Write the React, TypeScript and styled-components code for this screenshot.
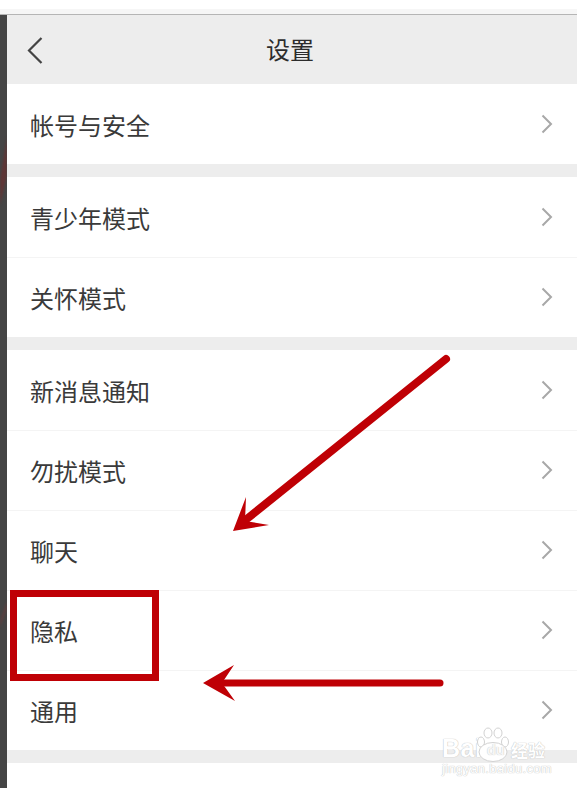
import React from 'react'
import styled, { createGlobalStyle } from 'styled-components'

const GlobalStyle = createGlobalStyle`
  html, body {
    margin: 0;
    padding: 0;
    background: #fff;
  }
  body {
    font-family: "Noto Sans CJK SC", "Liberation Sans", sans-serif;
  }
`

const Page = styled.div`
  position: relative;
  width: 577px;
  height: 788px;
  overflow: hidden;
  background: #fff;
`

const TopEdge = styled.div`
  height: 5px;
  margin-top: 9px;
  background: #f6f6f6;
  border-bottom: 1px solid #b5b5b5;
`

const Body = styled.div`
  display: flex;
  height: 773px;
`

const SideStrip = styled.div`
  position: relative;
  flex: 0 0 7px;
  overflow: hidden;
  background: #454545;
`

const Streak = styled.svg`
  position: absolute;
  left: 0;
  top: 0;
  filter: blur(1px);
`

const Screen = styled.div`
  flex: 1;
  min-width: 0;
  background: #fff;
`

const Header = styled.header`
  position: relative;
  display: flex;
  align-items: center;
  justify-content: center;
  height: 69px;
  background: #ededed;
`

const Title = styled.h1`
  margin: 0 4px 2px 0;
  font-size: 24px;
  line-height: 32px;
  font-weight: 400;
  color: #2c2c2c;
`

const BackButton = styled.svg`
  position: absolute;
  left: 19px;
  top: 21px;
`

const Group = styled.section`
  background: #fff;
`

const Gap = styled.div`
  height: 13px;
  background: #ededed;
`

const Row = styled.div`
  display: flex;
  align-items: center;
  justify-content: space-between;
  box-sizing: border-box;
  height: 80px;
  padding: 2px 24px 0 23px;
  & + & {
    padding-top: 0;
    border-top: 1px solid #f4f4f4;
  }
`

const Label = styled.span`
  font-size: 24px;
  line-height: 32px;
  color: #3a3a3a;
`

const Chevron = styled.svg`
  flex: none;
  margin-bottom: 2px;
`

const Overlay = styled.svg`
  position: absolute;
  inset: 0;
  pointer-events: none;
`

const Highlight = styled.div`
  position: absolute;
  left: 10px;
  top: 590px;
  box-sizing: border-box;
  width: 149px;
  height: 91px;
  border: 7px solid #bf0005;
`

const Watermark = styled.div`
  position: absolute;
  left: 442px;
  top: 727px;
  width: 106px;
  color: #fff;
  text-shadow: 0 0 1px #c4c4c4, 0 0 1px #c4c4c4;
`

const BaiduLine = styled.div`
  display: flex;
  align-items: flex-end;
  height: 35px;
  font-family: "Liberation Sans", sans-serif;
  font-size: 25px;
  font-weight: 700;
  line-height: 28px;
`

const Bai = styled.span`
  width: 39px;
  letter-spacing: 0.5px;
`

const PawMark = styled.span`
  position: relative;
  display: flex;
  align-items: flex-end;
  justify-content: center;
  flex: 0 0 29px;
  height: 35px;
  font-size: 15px;
  line-height: 20px;
  letter-spacing: -0.5px;
`

const PawShape = styled.svg`
  position: absolute;
  left: -6px;
  top: 0;
`

const DuText = styled.span`
  position: relative;
  margin-bottom: 2px;
  color: #f6f6f6;
  text-shadow: 0 0 1px #b8b8b8;
`

const BaiduCn = styled.span`
  margin-left: 1px;
  font-family: "Noto Sans CJK SC", sans-serif;
  font-size: 17px;
  line-height: 24px;
  font-weight: 700;
  white-space: nowrap;
`

const Domain = styled.div`
  font-family: "Liberation Sans", sans-serif;
  font-size: 13px;
  line-height: 14px;
  letter-spacing: 0.3px;
  white-space: nowrap;
`

const groups = [
  ['帐号与安全'],
  ['青少年模式', '关怀模式'],
  ['新消息通知', '勿扰模式', '聊天', '隐私', '通用'],
]

function ChevronIcon() {
  return (
    <Chevron width="12" height="20" viewBox="0 0 12 20" fill="none">
      <path d="M1.5 1.5 L10 10 L1.5 18.5" stroke="#a8a8a8" strokeWidth="2" />
    </Chevron>
  )
}

export default function App() {
  return (
    <Page>
      <GlobalStyle />
      <TopEdge />
      <Body>
        <SideStrip>
          <Streak width="7" height="773">
            <path d="M7 122 L7 160 L0 190 L0 165 Z" fill="#5f3636" />
            <path d="M0 606 L7 586 L7 594 L0 612 Z" fill="#5c4040" />
          </Streak>
        </SideStrip>
        <Screen>
          <Header>
            <BackButton width="18" height="30" viewBox="0 0 18 30" fill="none">
              <path d="M15.5 2 L3 14.5 L15.5 27" stroke="#444" strokeWidth="2.2" />
            </BackButton>
            <Title>设置</Title>
          </Header>
          {groups.map((rows) => (
            <React.Fragment key={rows[0]}>
              <Group>
                {rows.map((label) => (
                  <Row key={label}>
                    <Label>{label}</Label>
                    <ChevronIcon />
                  </Row>
                ))}
              </Group>
              <Gap />
            </React.Fragment>
          ))}
        </Screen>
      </Body>
      <Highlight />
      <Overlay width="577" height="788" viewBox="0 0 577 788">
        <path d="M446 359 L243 522" stroke="#bf0005" strokeWidth="8" strokeLinecap="round" fill="none" />
        <path d="M233 531 L246 497 L245 521 L269 525 Z" fill="#bf0005" />
        <path d="M440 683 L225 683" stroke="#bf0005" strokeWidth="7" strokeLinecap="round" fill="none" />
        <path d="M203 683 L234 665 L222 683 L235 701 Z" fill="#bf0005" />
      </Overlay>
      <Watermark>
        <BaiduLine>
          <Bai>Bai</Bai>
          <PawMark>
            <PawShape width="36" height="35" viewBox="0 0 36 35" fill="#fff" stroke="#d2d2d2" strokeWidth="1">
              <ellipse cx="6" cy="15" rx="3.5" ry="5" />
              <ellipse cx="13" cy="6" rx="4" ry="5" />
              <ellipse cx="23" cy="6" rx="4" ry="5" />
              <ellipse cx="30" cy="15" rx="3.5" ry="5" />
              <ellipse cx="18" cy="25" rx="14" ry="9.5" />
            </PawShape>
            <DuText>du</DuText>
          </PawMark>
          <BaiduCn>经验</BaiduCn>
        </BaiduLine>
        <Domain>jingyan.baidu.com</Domain>
      </Watermark>
    </Page>
  )
}
